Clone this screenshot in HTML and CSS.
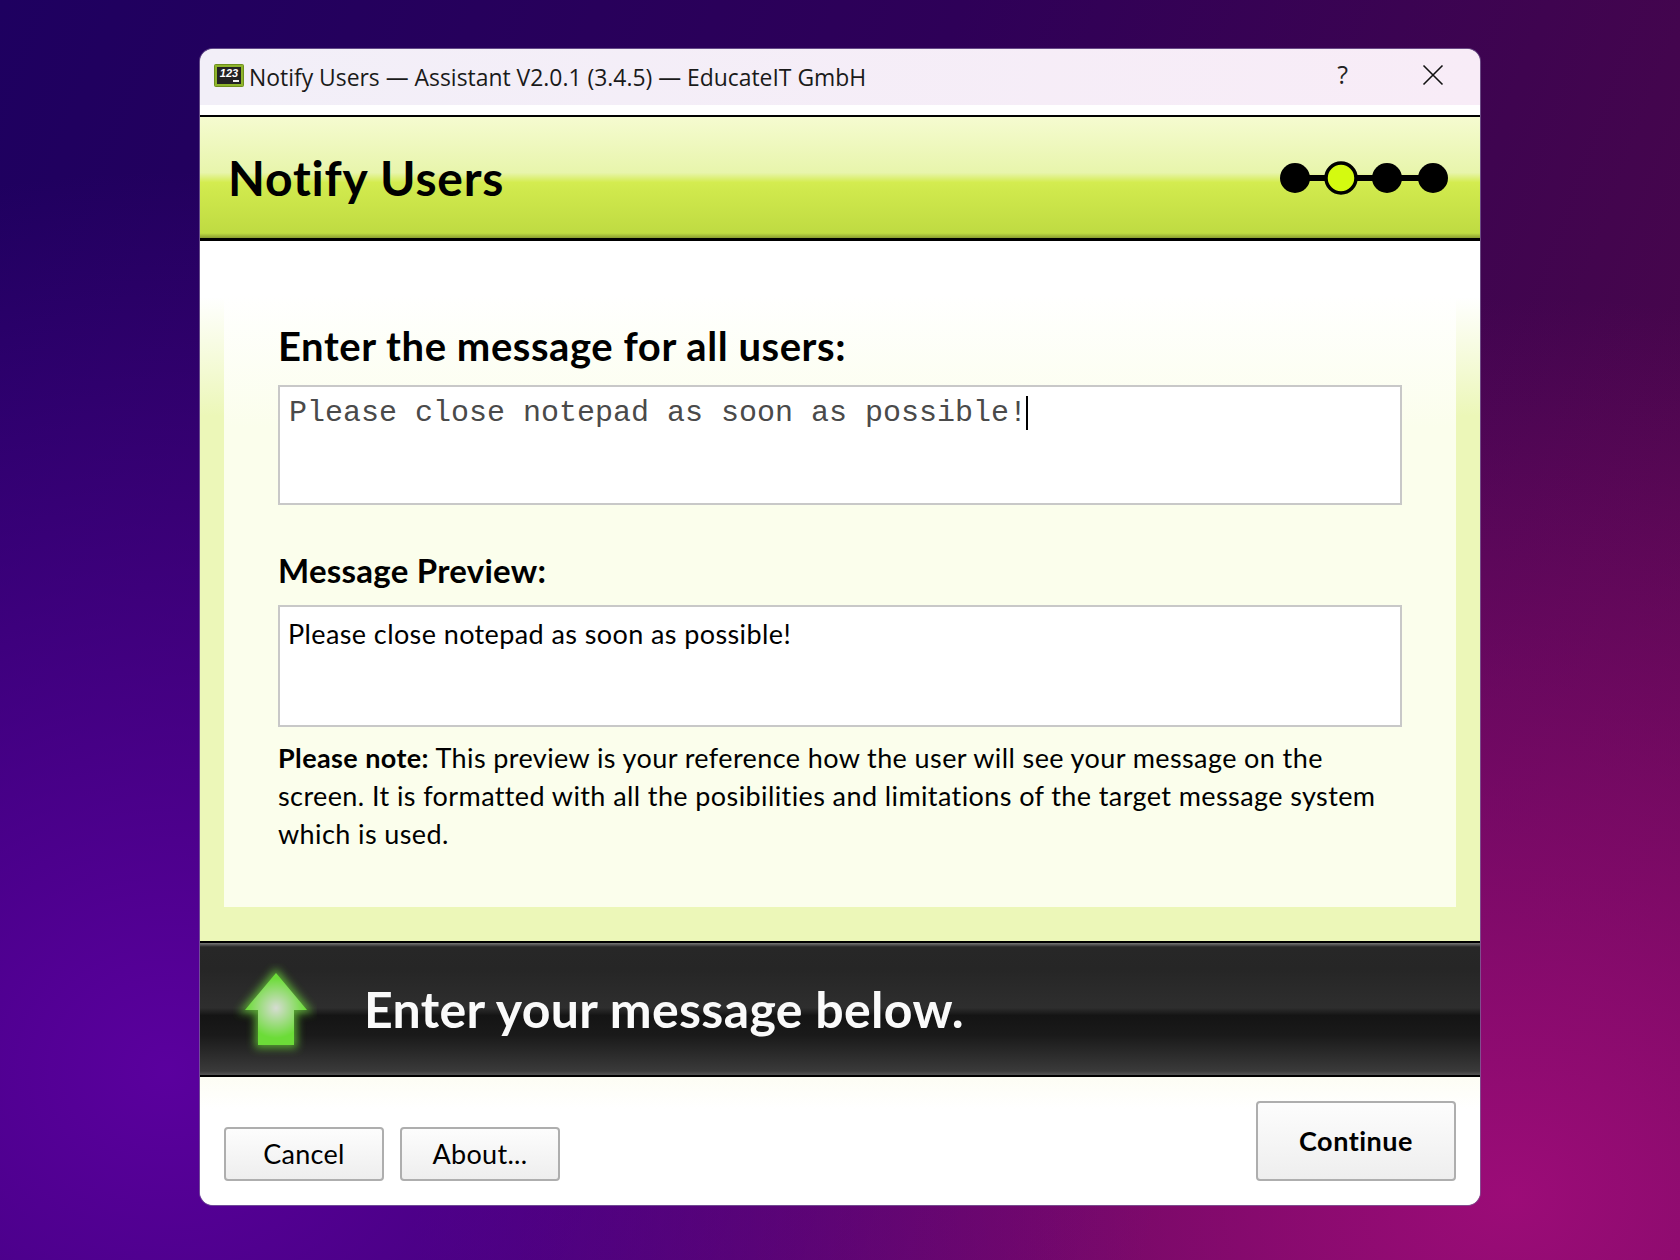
FILE: index.html
```html
<!DOCTYPE html>
<html lang="en">
<head>
	<meta charset="UTF-8">
	<title>Notify Users</title>
	<link rel="stylesheet" href="styles.css">
</head>
<body>
	<div class="window">
		<div class="titlebar">
			<svg class="app-icon" width="30" height="24" viewBox="0 0 30 24">
				<rect x="0.5" y="0.5" width="29" height="22" rx="1" fill="#8fb52c" stroke="#6f8f1e"/>
				<rect x="3" y="3" width="24" height="17" fill="#232323"/>
				<text x="15" y="13" class="app-icon-text" text-anchor="middle">123</text>
				<rect x="19" y="16" width="6" height="2" fill="#eee"/>
			</svg>
			<div class="titlebar-text">Notify Users — Assistant V2.0.1 (3.4.5) — EducateIT GmbH</div>
			<div class="titlebar-help">?</div>
			<svg class="titlebar-close" width="22" height="22" viewBox="0 0 22 22">
				<path d="M1.5 1.5 L20.5 20.5 M20.5 1.5 L1.5 20.5" stroke="#111" stroke-width="1.6" fill="none"/>
			</svg>
		</div>
		<div class="header">
			<div class="header-title">Notify Users</div>
			<svg class="steps" width="170" height="36" viewBox="0 0 170 36">
				<path d="M15 18 H153" stroke="#000" stroke-width="6"/>
				<circle cx="15" cy="18" r="15" fill="#000"/>
				<circle cx="61" cy="18" r="15" fill="#d4fa10" stroke="#000" stroke-width="3.5"/>
				<circle cx="107" cy="18" r="15" fill="#000"/>
				<circle cx="153" cy="18" r="15" fill="#000"/>
			</svg>
		</div>
		<div class="content">
			<div class="panel">
				<div class="label-big">Enter the message for all users:</div>
				<div class="input-box">Please close notepad as soon as possible!<span class="caret"></span></div>
				<div class="label-small">Message Preview:</div>
				<div class="preview-box">Please close notepad as soon as possible!</div>
				<p class="note"><b>Please note:</b> This preview is your reference how the user will see your message on the screen. It is formatted with all the posibilities and limitations of the target message system which is used.</p>
			</div>
		</div>
		<div class="hint">
			<svg class="hint-arrow" width="84" height="96" viewBox="0 0 84 96">
				<defs>
					<radialGradient id="arrowFill" cx="43" cy="45" r="30" gradientUnits="userSpaceOnUse">
						<stop offset="0" stop-color="#d6dcd2"/>
						<stop offset="1" stop-color="#6cdc38"/>
					</radialGradient>
					<filter id="arrowGlow" x="-40%" y="-40%" width="180%" height="180%">
						<feGaussianBlur stdDeviation="4.5"/>
					</filter>
				</defs>
				<path d="M43 10 L74 47 H61 V82 H25 V47 H12 Z" fill="#6fe03a" stroke="#6fe03a" stroke-width="6" opacity="0.7" filter="url(#arrowGlow)"/>
				<path d="M43 10 L74 47 H61 V82 H25 V47 H12 Z" fill="url(#arrowFill)"/>
			</svg>
			<div class="hint-text">Enter your message below.</div>
		</div>
		<div class="footer">
			<div class="btn">Cancel</div>
			<div class="btn">About...</div>
			<div class="btn btn-main">Continue</div>
		</div>
	</div>
</body>
</html>
```

FILE: styles.css
```css
html, body {
	height: 100%;
}
body {
	margin: 0;
	height: 1260px;
	overflow: hidden;
	font-family: Lato, "Liberation Sans", sans-serif;
	background:
		radial-gradient(ellipse 1000px 900px at 10% 85%, rgba(96, 0, 165, 0.9), rgba(96, 0, 165, 0) 100%),
		radial-gradient(ellipse 1100px 900px at 90% 95%, rgba(160, 12, 122, 0.95), rgba(160, 12, 122, 0) 100%),
		linear-gradient(110deg, #1e0060 0%, #2e0058 45%, #500848 100%);
	padding-top: 48px;
	box-sizing: border-box;
}
.window {
	width: 1280px;
	height: 1156px;
	margin-left: 199px;
	background: #fff;
	background-clip: padding-box;
	border: 1px solid rgba(125, 105, 155, 0.7);
	border-radius: 14px;
	overflow: hidden;
	display: flex;
	flex-direction: column;
}
.titlebar {
	height: 56px;
	flex: none;
	display: flex;
	align-items: center;
	padding: 0 36px 0 14px;
	background: linear-gradient(90deg, #f2eff8, #f8ecf7);
	border-bottom: 10px solid #fff;
}
.app-icon {
	flex: none;
	margin: 0 5px 3px 0;
}
.app-icon-text {
	font: italic bold 11px "Liberation Sans", sans-serif;
	fill: #fff;
}
.titlebar-text {
	flex: 1;
	font-family: "Open Sans", sans-serif;
	font-size: 22.9px;
	color: #1a1a1a;
	padding-top: 1px;
}
.titlebar-help {
	font-family: "Open Sans", sans-serif;
	font-size: 25px;
	margin: 0 74px 6px 0;
	color: #222;
}
.titlebar-close {
	margin-bottom: 4px;
}
.header {
	height: 121px;
	flex: none;
	display: flex;
	align-items: center;
	justify-content: space-between;
	padding: 0 30px 0 28px;
	border-top: 2px solid #000;
	border-bottom: 3px solid #000;
	background: linear-gradient(180deg, #f5fbd0 0%, #e8f5ac 46%, #d4ec50 54%, #cfe84c 62%, #bfdb42 96%, #8a9c30 100%);
}
.header-title {
	font-size: 48px;
	font-weight: 700;
	letter-spacing: 0.8px;
	color: #000;
}
.content {
	height: 700px;
	flex: none;
	box-sizing: border-box;
	padding: 0 24px 34px;
	background: linear-gradient(180deg, #fff 0%, #fff 8%, #ecf7b8 25%, #ecf7b8 100%);
}
.panel {
	height: 666px;
	box-sizing: border-box;
	padding: 81px 54px 0;
	background: linear-gradient(180deg, #fff 0%, #fff 8%, #fbfeec 28%, #fbfeec 100%);
}
.label-big {
	font-size: 40px;
	font-weight: 700;
	line-height: 48px;
	letter-spacing: 0.56px;
	color: #000;
}
.input-box {
	margin-top: 15px;
	height: 120px;
	box-sizing: border-box;
	border: 2px solid #c8c8c8;
	background: #fff;
	padding: 9px 9px;
	font-family: "Liberation Mono", monospace;
	font-size: 30px;
	line-height: 34px;
	color: #4a4a4a;
}
.caret {
	display: inline-block;
	width: 2px;
	height: 34px;
	background: #000;
	vertical-align: top;
	margin-left: -1px;
}
.label-small {
	margin-top: 44px;
	font-size: 33px;
	font-weight: 700;
	line-height: 42px;
	letter-spacing: 0.25px;
	color: #000;
}
.preview-box {
	margin-top: 14px;
	height: 122px;
	box-sizing: border-box;
	border: 2px solid #c8c8c8;
	background: #fff;
	padding: 10px 8px;
	font-size: 27px;
	line-height: 34px;
	letter-spacing: 0.4px;
	color: #000;
}
.note {
	margin: 12px 0 0;
	font-size: 27px;
	line-height: 38px;
	letter-spacing: 0.4px;
	color: #000;
}
.hint {
	height: 136px;
	flex: none;
	box-sizing: border-box;
	display: flex;
	align-items: center;
	padding-left: 33px;
	border-top: 2px solid #000;
	border-bottom: 2px solid #000;
	background: linear-gradient(180deg, #777 0%, #272727 3%, #262626 20%, #2e2e2e 49%, #141414 55%, #1a1a1a 70%, #3a3a3a 97%, #555 100%);
}
.hint-arrow {
	flex: none;
	margin-top: 4px;
}
.hint-text {
	margin-left: 47px;
	font-size: 50px;
	font-weight: 700;
	letter-spacing: 0.35px;
	color: #fafafa;
}
.footer {
	flex: 1;
	display: flex;
	align-items: flex-end;
	gap: 16px;
	padding: 0 24px 24px;
	background: linear-gradient(180deg, #fdfdf4 0%, #fff 25%);
}
.btn {
	width: 160px;
	height: 54px;
	box-sizing: border-box;
	display: flex;
	align-items: center;
	justify-content: center;
	padding-bottom: 2px;
	border: 2px solid #aeaeae;
	border-radius: 4px;
	background: linear-gradient(180deg, #fdfdfd, #eeeeee);
	font-size: 27px;
	letter-spacing: 0.3px;
	color: #000;
}
.btn-main {
	width: 200px;
	height: 80px;
	margin-left: auto;
	font-weight: 700;
	letter-spacing: 0.5px;
}
```
